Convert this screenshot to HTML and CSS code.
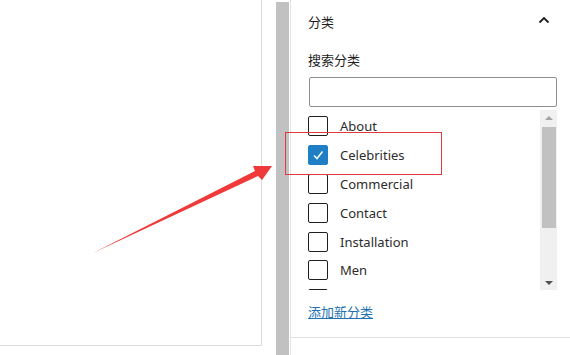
FILE: index.html
```html
<!DOCTYPE html>
<html lang="zh">
<head>
<meta charset="utf-8">
<link rel="stylesheet" href="styles.css">
</head>
<body>
<div class="page">
  <div class="canvas"></div>
  <div class="gutter"><div class="gutter-thumb"></div></div>
  <aside class="sidebar">
    <div class="panel">
      <div class="panel-header">
        <span class="panel-title">分类</span>
        <svg class="chevron" width="12" height="8" viewBox="0 0 12 8"><path d="M1.5 6.5 L6 2 L10.5 6.5" fill="none" stroke="#1e1e1e" stroke-width="1.8"/></svg>
      </div>
      <div class="panel-body">
        <label class="search-label">搜索分类</label>
        <div class="search-input"></div>
        <div class="list-box">
          <ul class="term-list">
            <li class="term"><span class="cb"></span><span class="term-name">About</span></li>
            <li class="term"><span class="cb checked"><svg width="14" height="14" viewBox="0 0 14 14"><path d="M3 7.5 L6 10.5 L11.5 3.5" fill="none" stroke="#fff" stroke-width="1.5"/></svg></span><span class="term-name">Celebrities</span></li>
            <li class="term"><span class="cb"></span><span class="term-name">Commercial</span></li>
            <li class="term"><span class="cb"></span><span class="term-name">Contact</span></li>
            <li class="term"><span class="cb"></span><span class="term-name">Installation</span></li>
            <li class="term"><span class="cb"></span><span class="term-name">Men</span></li>
            <li class="term"><span class="cb"></span></li>
          </ul>
          <div class="scrollbar">
            <span class="sb-up"></span>
            <span class="sb-thumb"></span>
            <span class="sb-down"></span>
          </div>
        </div>
        <a class="add-link" href="#">添加新分类</a>
      </div>
    </div>
  </aside>
</div>
<svg class="annotation" width="570" height="355" viewBox="0 0 570 355">
  <rect x="285.5" y="132.5" width="156" height="42" fill="none" stroke="#e0393e" stroke-width="1"/>
  <polygon points="93,253 255,171 253,166 272,166 262,180 258,176" fill="#f03a3a"/>
</svg>
</body>
</html>
```
FILE: styles.css
```css
* { box-sizing: border-box; }
html, body { margin: 0; padding: 0; background: #fff; }
body {
  width: 570px;
  height: 355px;
  overflow: hidden;
  position: relative;
  font-family: "Noto Sans", "Noto Sans CJK SC", sans-serif;
  color: #1e1e1e;
}
.page {
  display: flex;
  height: 355px;
}
.canvas {
  width: 262px;
  height: 346px;
  border-right: 1px solid #dcdcdc;
  border-bottom: 1px solid #dcdcdc;
  flex: none;
}
.gutter {
  width: 28px;
  flex: none;
  padding: 2px 1px 0 14px;
}
.gutter-thumb {
  width: 13px;
  height: 100%;
  background: #c1c1c1;
}
.sidebar {
  flex: 1;
  border-left: 1px solid #e4e4e4;
}
.panel {
  border-bottom: 1px solid #e0e0e0;
  height: 338px;
}
.panel-header {
  height: 42px;
  display: flex;
  align-items: center;
  justify-content: space-between;
  padding: 0 20px 0 17px;
}
.panel-title {
  font-size: 13px;
  font-family: "Noto Sans CJK SC", sans-serif;
}
.chevron { display: block; margin-top: -2px; }
.panel-body {
  padding: 0 13px 0 17px;
  display: flex;
  flex-direction: column;
}
.search-label {
  margin-top: 9px;
  font-size: 13px;
  line-height: 18px;
  font-family: "Noto Sans CJK SC", sans-serif;
}
.search-input {
  margin-top: 8px;
  margin-left: 1px;
  height: 30px;
  border: 1px solid #8c8f94;
  border-radius: 2px;
}
.list-box {
  margin-top: 3px;
  height: 180px;
  display: flex;
}
.term-list {
  list-style: none;
  margin: 0;
  padding: 2px 0 0 0;
  flex: 1;
  overflow: hidden;
}
.term {
  height: 28.8px;
  display: flex;
  align-items: center;
}
.cb {
  width: 20px;
  height: 20px;
  border: 1.5px solid #1e1e1e;
  border-radius: 2px;
  display: flex;
  align-items: center;
  justify-content: center;
  flex: none;
}
.cb.checked {
  background: #1e7fc4;
  border-color: #1e7fc4;
}
.term-name {
  margin-left: 12px;
  font-size: 13px;
  color: #2c2c2c;
}
.scrollbar {
  width: 17px;
  height: 180px;
  background: #f0f0f0;
  display: flex;
  flex-direction: column;
  align-items: center;
  flex: none;
}
.sb-up {
  margin-top: 6px;
  width: 0; height: 0;
  border-left: 4px solid transparent;
  border-right: 4px solid transparent;
  border-bottom: 4px solid #a3a3a3;
}
.sb-thumb {
  margin-top: 7px;
  width: 14px;
  height: 101px;
  background: #c1c1c1;
}
.sb-down {
  margin-top: 53px;
  width: 0; height: 0;
  border-left: 4px solid transparent;
  border-right: 4px solid transparent;
  border-top: 4px solid #505050;
}
.add-link {
  margin-top: 13px;
  font-size: 13px;
  line-height: 18px;
  color: #2271b1;
  text-decoration: underline;
  font-family: "Noto Sans CJK SC", sans-serif;
  align-self: flex-start;
}
.annotation {
  position: absolute;
  left: 0;
  top: 0;
  pointer-events: none;
}
```
